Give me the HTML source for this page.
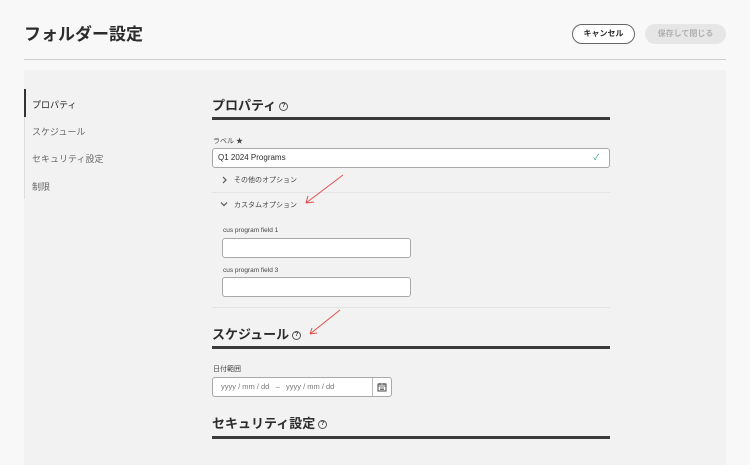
<!DOCTYPE html>
<html><head><meta charset="utf-8"><style>
*{box-sizing:border-box;margin:0;padding:0}
body{width:750px;height:465px;overflow:hidden;background:#f8f8f8;font-family:"Liberation Sans","Noto Sans CJK JP",sans-serif;color:#2c2c2c;position:relative}
.a{position:absolute}
.h{font-weight:700}
.q{display:inline-block;width:9px;height:9px;border:1px solid #555;border-radius:50%;font-size:6px;text-align:center;line-height:7px;vertical-align:middle;margin-left:3px;font-weight:700}
.bar{height:3px;background:#3a3a3a}
.inp{background:#fff;border:1px solid #a8a8a8;border-radius:3px}
.s{font-size:7px;color:#444}
</style></head><body>
<div class="a h" style="left:24px;top:20px;font-size:17px">フォルダー設定</div>
<div class="a" style="left:572px;top:24px;width:63px;height:20px;border:1.5px solid #666;border-radius:10px;background:#fff;font-size:8px;font-weight:700;text-align:center;line-height:17px">キャンセル</div>
<div class="a" style="left:645px;top:24px;width:81px;height:20px;border-radius:10px;background:#e6e6e6;color:#b0b0b0;font-size:8px;font-weight:700;text-align:center;line-height:20px">保存して閉じる</div>
<div class="a" style="left:24px;top:59px;width:702px;height:1px;background:#cfcfcf"></div>
<div class="a" style="left:24px;top:70px;width:702px;height:395px;background:#f2f2f2"></div>
<div class="a" style="left:24px;top:89px;width:1px;height:110px;background:#ddd"></div>
<div class="a" style="left:24px;top:89px;width:2px;height:28px;background:#333"></div>
<div class="a" style="left:32px;top:98px;font-size:9px;color:#222">プロパティ</div>
<div class="a" style="left:32px;top:125px;font-size:9px;color:#666">スケジュール</div>
<div class="a" style="left:32px;top:152px;font-size:9px;color:#666">セキュリティ設定</div>
<div class="a" style="left:32px;top:180px;font-size:9px;color:#666">制限</div>

<div class="a h" style="left:212px;top:95px;font-size:13px">プロパティ<span class="q">?</span></div>
<div class="a bar" style="left:212px;top:117px;width:398px"></div>
<div class="a s" style="left:213px;top:136px">ラベル ★</div>
<div class="a inp" style="left:212px;top:148px;width:398px;height:20px;font-size:8px;line-height:18px;padding-left:5px">Q1 2024 Programs<span style="position:absolute;right:10px;color:#2d9d78">✓</span></div>
<svg class="a" style="left:221px;top:176px" width="6" height="8"><path d="M2 1l3 3-3 3" stroke="#555" fill="none" stroke-width="1.2"/></svg>
<div class="a s" style="left:234px;top:175px">その他のオプション</div>
<div class="a" style="left:212px;top:192px;width:398px;height:1px;background:#e4e4e4"></div>
<svg class="a" style="left:220px;top:201px" width="8" height="6"><path d="M1 1.5l3 3 3-3" stroke="#555" fill="none" stroke-width="1.2"/></svg>
<div class="a s" style="left:234px;top:200px">カスタムオプション</div>
<div class="a s" style="left:223px;top:227px;font-size:6.5px">cus program field 1</div>
<div class="a inp" style="left:222px;top:238px;width:189px;height:20px"></div>
<div class="a s" style="left:223px;top:267px;font-size:6.5px">cus program field 3</div>
<div class="a inp" style="left:222px;top:277px;width:189px;height:20px"></div>
<div class="a" style="left:212px;top:307px;width:398px;height:1px;background:#e4e4e4"></div>
<svg class="a" style="left:300px;top:170px" width="50" height="40"><path d="M43 5L6 33M6 33l8-1M6 33l2-7" stroke="#e05050" stroke-width="1" fill="none"/></svg>
<svg class="a" style="left:305px;top:308px" width="40" height="30"><path d="M35 2L5 26M5 26l7-1M5 26l2-6" stroke="#e05050" stroke-width="1" fill="none"/></svg>

<div class="a h" style="left:212px;top:324px;font-size:13px">スケジュール<span class="q">?</span></div>
<div class="a bar" style="left:212px;top:346px;width:398px"></div>
<div class="a s" style="left:213px;top:364px">日付範囲</div>
<div class="a inp" style="left:212px;top:377px;width:180px;height:20px;font-size:7.5px;color:#777;line-height:18px;padding-left:8px">yyyy / mm / dd&nbsp;&nbsp; –&nbsp;&nbsp; yyyy / mm / dd
<div class="a" style="left:159px;top:0;width:1px;height:18px;background:#bbb"></div>
<svg class="a" style="left:164px;top:4px" width="10" height="10"><rect x="1" y="2" width="8" height="7" fill="none" stroke="#444"/><path d="M1 4h8M3 1v2M7 1v2M3 6h4M3 7.5h4" stroke="#444" stroke-width=".8"/></svg></div>
<div class="a h" style="left:212px;top:413px;font-size:13px">セキュリティ設定<span class="q">?</span></div>
<div class="a bar" style="left:212px;top:436px;width:398px"></div>
</body></html>
